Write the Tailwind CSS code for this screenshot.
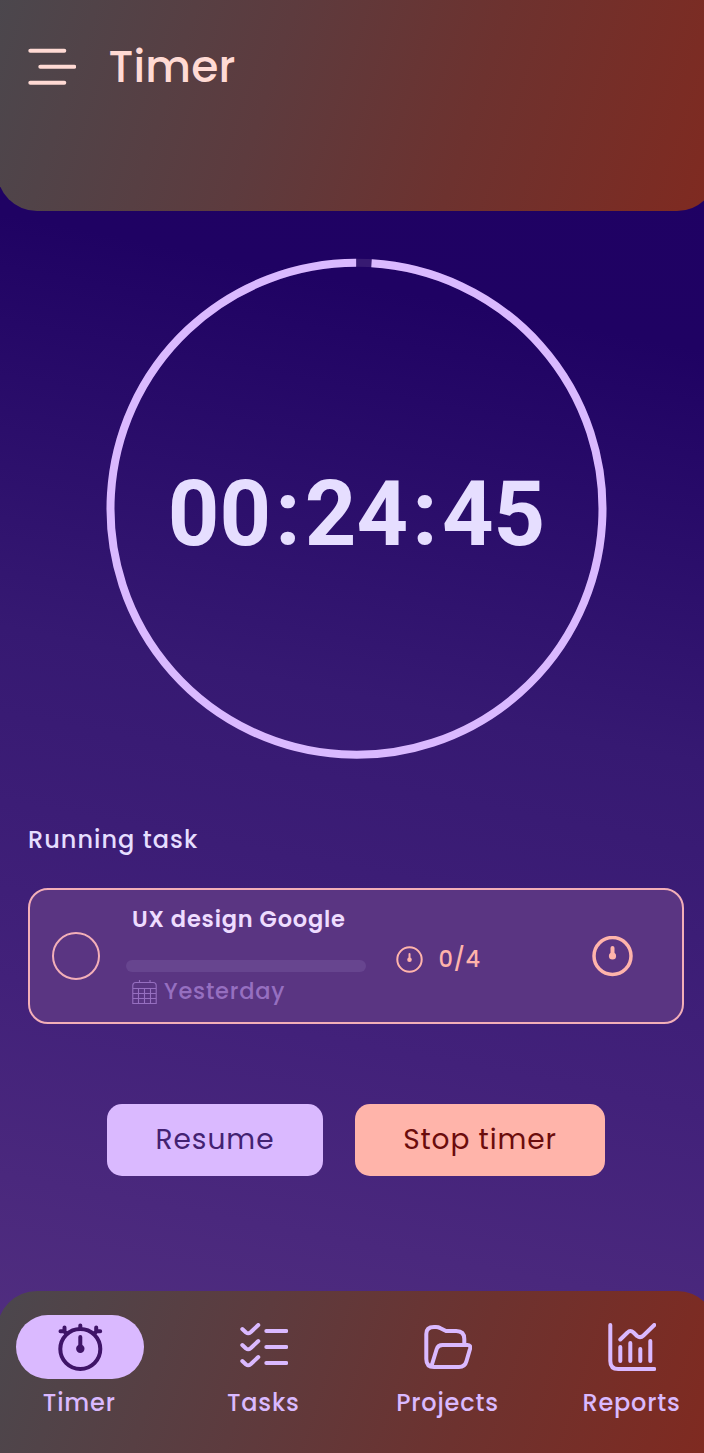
<!DOCTYPE html>
<html lang="en">
<head>
<meta charset="utf-8">
<title>Timer</title>
<script src="https://cdn.jsdelivr.net/npm/@tailwindcss/browser@4"></script>
</head>
<body class="w-[704px] h-[1453px] overflow-hidden bg-[linear-gradient(191deg,#1f0064_0%,#1f0263_22%,#361972_48%,#42217a_70%,#522f80_95%)] font-['Poppins','Inter',sans-serif] whitespace-nowrap">
<div class="w-[720px] h-[1453px] -ml-[3px] flex flex-col">
  <header class="h-[210.5px] shrink-0 rounded-b-[40px] bg-[linear-gradient(108deg,#4b474d_0%,#5d3b3e_38%,#6d322f_65%,#802a20_100%)] pl-[31px] pt-[42px] flex items-start gap-[32.500px] text-[#ffdad4]">
    <svg class="w-[48px] h-[48px]" viewBox="0 0 48 48" fill="none" stroke="currentColor" stroke-width="4" stroke-linecap="round"><path d="M2.3 8.8H36.3M12.3 24.8H46.3M2.3 40.8H36.3"/></svg>
    <h1 class="text-[44px] leading-[49px] font-medium tracking-[0.2px]">Timer</h1>
  </header>

  <main class="flex-1 flex flex-col">
    <section class="mt-[47.500px] ml-[109px] size-[501px] grid place-items-center">
      <svg class="size-[501px] col-start-1 row-start-1" viewBox="0 0 501 501" fill="none" stroke-width="8">
        <circle cx="250.5" cy="250.800" r="246" stroke="#371a72"/>
        <circle cx="250.5" cy="250.800" r="246" stroke="#dab9ff" pathLength="100" stroke-dasharray="99 1" transform="rotate(-86.500 250.500 250.800)"/>
      </svg>
      <div class="col-start-1 row-start-1 mt-[13px] font-['Roboto'] font-bold text-[90px] leading-none text-[#e6deff]">00<span class="mx-[4.200px]">:</span>24<span class="mx-[4.200px]">:</span>45</div>
    </section>

    <h2 class="mt-[64px] ml-[31px] text-[24px] leading-[34px] font-medium tracking-[1.050px] text-[#e6deff]">Running task</h2>

    <section class="mt-[31px] ml-[31px] w-[656px] h-[136px] rounded-[20px] border-2 border-[#f3afb8] bg-[#5a3582] flex">
      <div class="ml-[22px] mt-[42px] size-[48px] rounded-full border-2 border-[#f3afb8]"></div>
      <div class="ml-[26px] w-[240px] flex flex-col">
        <h3 class="mt-[12px] ml-[6px] text-[22.500px] leading-[34px] font-semibold tracking-[0.800px] text-[#eedcff]">UX design Google</h3>
        <div class="mt-[24px] h-[12px] rounded-full bg-[#67458f]"></div>
        <div class="mt-[2px] ml-[6px] flex h-[34px] items-center gap-[7px] text-[#966fc0]">
          <svg class="w-[25px] h-[34px]" viewBox="0 0 25 34" fill="none" stroke="currentColor" stroke-width="1.1"><path d="M.8 29.5V11.5Q.8 8.5 3.8 8.5H21.200Q24.200 8.500 24.200 11.500V29.500ZM.8 14.500H24.200M.8 19.500H24.200M.8 24.500H24.200M6.500 14.500V29.500M12.500 14.500V29.500M18.500 14.500V29.500M7.500 6V8.500M18 6V8.500"/></svg>
          <span class="text-[22.500px] leading-[34px] font-medium tracking-[0.800px]">Yesterday</span>
        </div>
      </div>
      <div class="ml-[30px] mt-[52px] flex h-[34px] items-center gap-[15.500px] text-[#ffb4ab]">
        <svg class="size-[27px]" viewBox="0 0 27 27" fill="none" stroke="currentColor"><circle cx="13.500" cy="13.500" r="12.200" stroke-width="2"/><path d="M13.500 8V14" stroke-width="2" stroke-linecap="round"/><circle cx="13.500" cy="13.800" r="2.300" fill="currentColor" stroke="none"/></svg>
        <span class="text-[22.500px] leading-[34px] font-medium tracking-[0.500px]">0/4</span>
      </div>
      <svg class="ml-[111px] mt-[46px] size-[41px] text-[#ffb4ab]" viewBox="0 0 41 41" fill="none" stroke="currentColor"><circle cx="20.500" cy="20" r="18.500" stroke-width="3.500"/><path d="M20.500 12V19" stroke-width="4" stroke-linecap="round"/><circle cx="20.500" cy="20" r="3.600" fill="currentColor" stroke="none"/></svg>
    </section>

    <div class="mt-[80px] ml-[110px] flex gap-[32px] text-[28px] font-normal">
      <button class="w-[216px] h-[72px] rounded-[15px] bg-[#dab9ff] text-[#432272] tracking-[1px]">Resume</button>
      <button class="w-[250px] h-[72px] rounded-[15px] bg-[#ffb4aa] text-[#6b0c0c] tracking-[0.900px]">Stop timer</button>
    </div>
  </main>

  <nav class="h-[162px] shrink-0 rounded-t-[40px] bg-[linear-gradient(108deg,#4b474d_0%,#5d3b3e_36%,#6d322f_65%,#802a20_100%)] pl-[19px] pt-[24px] flex gap-[56px] text-[24px] leading-[34px] font-medium text-[#dab9ff]">
    <a class="w-[128px] flex flex-col items-center gap-[7px]">
      <div class="w-[128px] h-[64px] rounded-full bg-[#dab9ff] flex items-center justify-center text-[#3f1468]">
        <svg class="size-[48px]" viewBox="0 0 48 48" fill="none" stroke="currentColor" stroke-width="4" stroke-linecap="round"><circle cx="24.300" cy="26" r="20"/><path d="M24.300 14V24M24.300 2.500V6M4.500 8.200H8L10.500 10.500M8.500 4.500V8.500M44.200 8.200H40.700L38.200 10.500M40.200 4.500V8.500"/><circle cx="24.300" cy="25.800" r="4.200" fill="currentColor" stroke="none"/></svg>
      </div>
      <span class="pr-[1.500px] tracking-[0.800px]">Timer</span>
    </a>
    <a class="w-[128px] flex flex-col items-center gap-[7px]">
      <div class="h-[64px] flex items-center"><svg class="size-[48px]" viewBox="0 0 48 48" fill="none" stroke="currentColor" stroke-width="4" stroke-linecap="round" stroke-linejoin="round"><path d="M26.300 8H46.300M26.300 24H46.300M26.300 40H46.300M2.300 6L6 9.500Q8.300 11.200 10.600 9.200L18.300 2M2.300 22L6 25.500Q8.300 27.200 10.600 25.200L18.300 18M2.300 38L6 41.500Q8.300 43.200 10.600 41.200L18.300 34"/></svg></div>
      <span class="pr-[1.500px] tracking-[0.800px]">Tasks</span>
    </a>
    <a class="w-[128px] flex flex-col items-center gap-[7px]">
      <div class="h-[64px] flex items-center"><svg class="size-[48px]" viewBox="0 0 48 48" fill="none" stroke="currentColor" stroke-width="4" stroke-linecap="round" stroke-linejoin="round"><path d="M40.300 21V16Q40.300 8 32.300 8H22L16 5Q14.500 4 12 4H10Q2.300 4 2.300 11V36Q2.300 44 10 44H35Q41 44 42.500 38L46.100 25.500Q46.900 22 43.500 22H18.500Q14 22 12.700 26L7.500 43"/></svg></div>
      <span class="pr-[1px] tracking-[0.800px]">Projects</span>
    </a>
    <a class="w-[128px] flex flex-col items-center gap-[7px]">
      <div class="h-[64px] flex items-center"><svg class="size-[48px]" viewBox="0 0 48 48" fill="none" stroke="currentColor" stroke-width="4" stroke-linecap="round" stroke-linejoin="round"><path d="M2.300 2V38Q2.300 46 10.300 46H46.300M12.300 38V24M22.300 38V20M32.300 38V26M42.300 38V18M12.300 16.500L19.500 9.500Q22.300 6.500 25.500 9.500L29 13Q32.300 15.500 35.500 12.500L46.300 2"/></svg></div>
      <span class="pr-[1px] tracking-[0.800px]">Reports</span>
    </a>
  </nav>
</div>
</body>
</html>
